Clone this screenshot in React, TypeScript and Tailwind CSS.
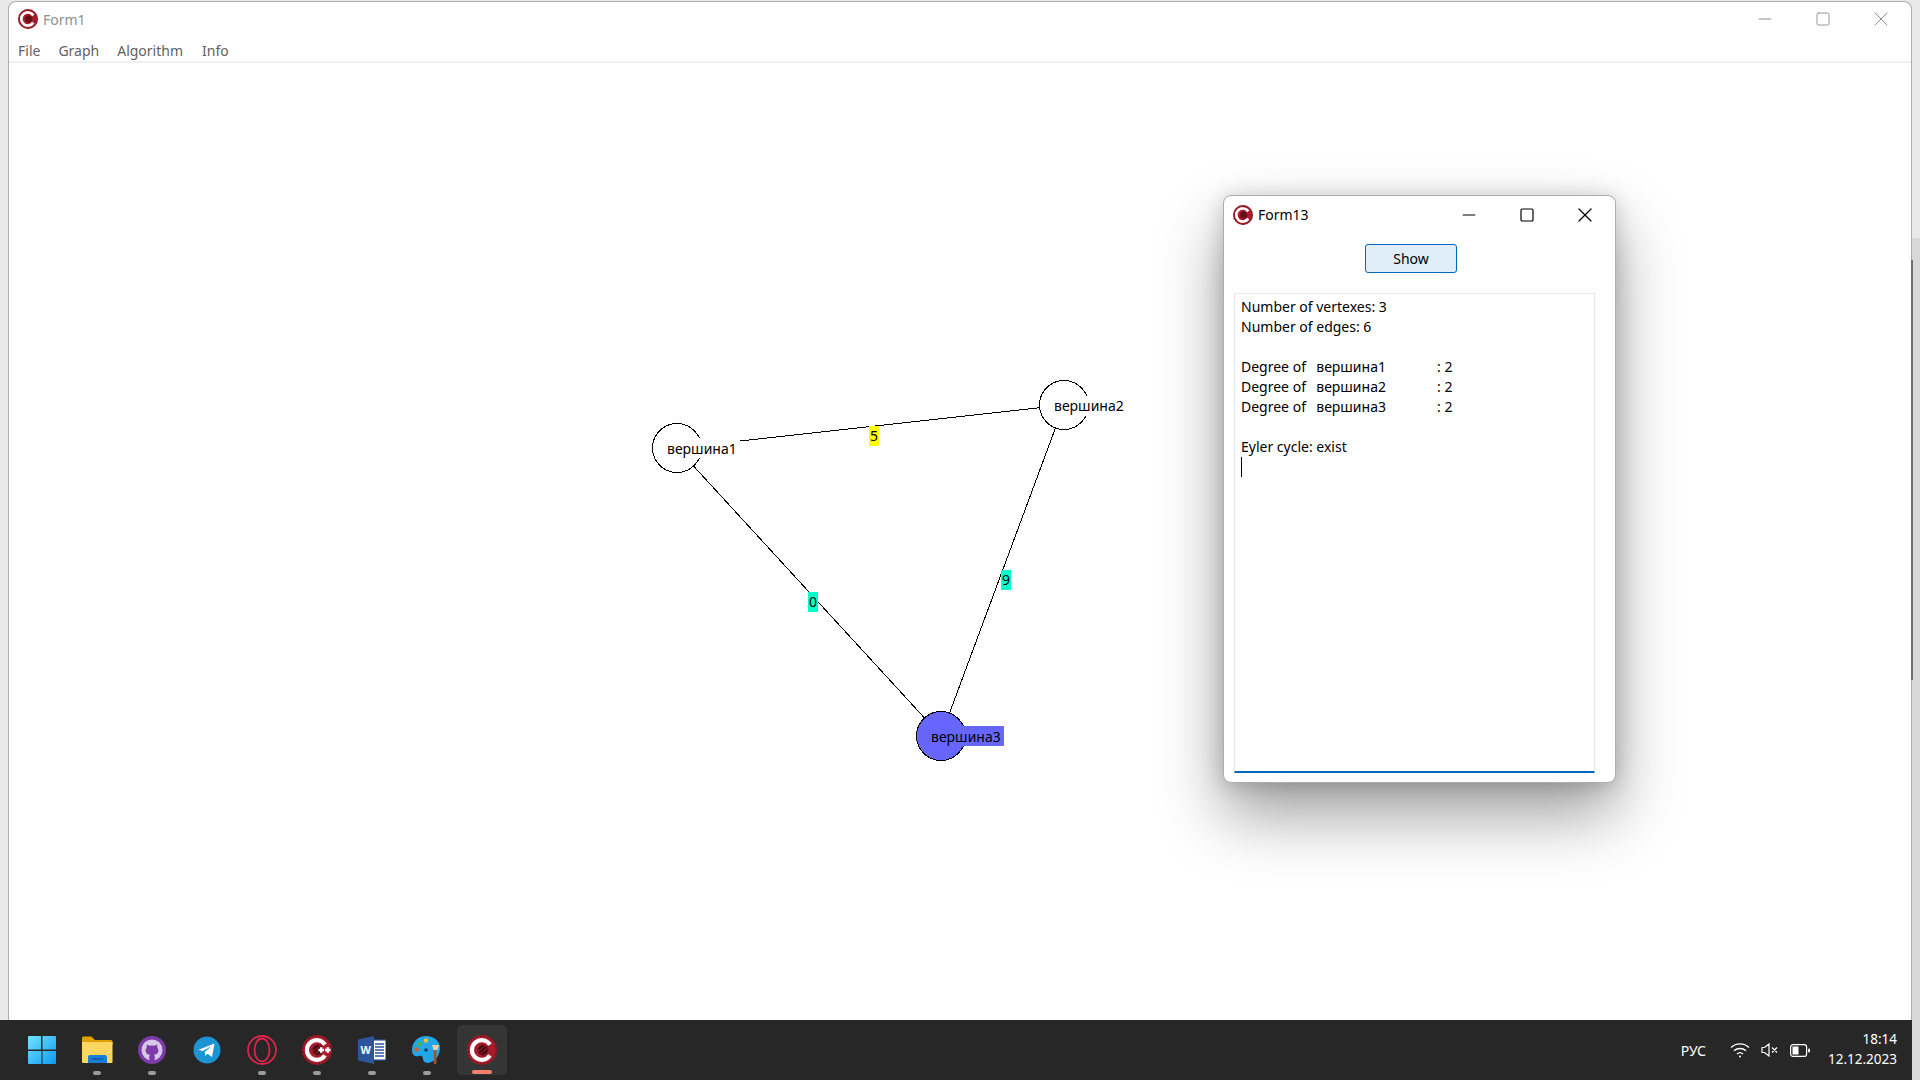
import React from 'react';
import { Minus, Square, X } from 'lucide-react';

const font = "font-['Noto_Sans','Open_Sans',sans-serif]";

// the red C++ Builder style logo, used for the title bars and the taskbar
const AppLogo = ({ size, plus = false }: { size: number; plus?: boolean }) => (
  <svg width={size} height={size} viewBox="0 0 32 32">
    <circle cx="16" cy="16" r="16" fill="#a81c2c" />
    <circle cx="16" cy="16" r="15" fill="none" stroke="#5c0f18" strokeWidth="1" strokeDasharray="2 2" />
    <path d="M24.5 10.2A10.5 10.5 0 1 0 24.5 21.8" fill="none" stroke="#fff" strokeWidth="4.4" />
    <circle cx="17" cy="16" r="6" fill="#7a1420" />
    <path d="M12.5 15l5-4M13 19l7-6M16 21l6-5" stroke="#2d0a0e" strokeWidth="1.4" />
    {plus && (
      <path d="M17.500 16h6M20.500 13v6M24.500 16h6M27.500 13v6" stroke="#fff" strokeWidth="2.600" />
    )}
  </svg>
);

const WindowsIcon = () => (
  <svg width="30" height="30" viewBox="0 0 30 30">
    <defs>
      <linearGradient id="win" x1="0" y1="0" x2="1" y2="1">
        <stop offset="0" stopColor="#6fe4fb" />
        <stop offset="1" stopColor="#0f9bf5" />
      </linearGradient>
    </defs>
    <path d="M1 2a1 1 0 0 1 1-1h12v13.5H1zM15.500 1H28a1 1 0 0 1 1 1v12.500H15.500zM1 16h13.500v13H2a1 1 0 0 1-1-1zM15.500 16H29v12a1 1 0 0 1-1 1H15.500z" fill="url(#win)" />
  </svg>
);

const FolderIcon = () => (
  <svg width="32" height="28" viewBox="0 0 32 28">
    <path d="M1 2a1.500 1.500 0 0 1 1.500-1.500h8L14 4h16a1.500 1.500 0 0 1 1.500 1.500V9H1z" fill="#e0a100" />
    <path d="M1 6h30.500v20a1 1 0 0 1-1 1H2a1 1 0 0 1-1-1z" fill="#fcd661" />
    <path d="M7 21a2 2 0 0 1 2-2h15a2 2 0 0 1 2 2v6H7z" fill="#1a7fd4" />
    <path d="M11 23h11" stroke="#0b4f94" strokeWidth="1.200" />
  </svg>
);

const GithubIcon = () => (
  <svg width="28" height="28" viewBox="0 0 28 28">
    <circle cx="14" cy="14" r="14" fill="#7d3aa8" />
    <circle cx="14" cy="14" r="10.500" fill="#d8c6e6" />
    <path d="M9 8.500l2.500 1.300a9 9 0 0 1 5 0L19 8.500l.5 3.500c.8 1 1 2 .8 3.200-.4 2.300-2 3.300-4.300 3.600.6.500.8 1.200.8 2V25h-5.600v-4.200c0-.800.2-1.500.8-2-2.300-.3-3.900-1.300-4.300-3.600-.2-1.200 0-2.200.8-3.200z" fill="#7d3aa8" />
  </svg>
);

const TelegramIcon = () => (
  <svg width="28" height="28" viewBox="0 0 28 28">
    <circle cx="14" cy="14" r="13.500" fill="#1c93d2" />
    <path d="M5.500 13.800L21.500 7.500 19 21l-4.500-3.200-2.300 2.200-.5-4 7-6-9 5z" fill="#fff" />
  </svg>
);

const OperaIcon = () => (
  <svg width="30" height="30" viewBox="0 0 30 30" fill="none" stroke="#e0234a">
    <circle cx="15" cy="15" r="14" strokeWidth="1.800" />
    <ellipse cx="15" cy="15" rx="7.500" ry="11.500" strokeWidth="1.800" />
  </svg>
);

const WordIcon = () => (
  <svg width="28" height="28" viewBox="0 0 28 28">
    <rect x="12" y="4" width="16" height="20" fill="#fff" stroke="#2b579a" strokeWidth="1.200" />
    <path d="M17 8h9M17 11h9M17 14h9M17 17h9M17 20h9" stroke="#2b579a" strokeWidth="1.400" />
    <path d="M0 3.500L16 0v28L0 24.500z" fill="#2b579a" />
    <text x="2.500" y="18" fill="#fff" fontSize="11" fontWeight="700" fontFamily="Liberation Sans">W</text>
  </svg>
);

const PaletteIcon = () => (
  <svg width="30" height="30" viewBox="0 0 30 30">
    <path d="M14 1C6 1 0 7 0 15c0 6 4 7 7 6 3-1 4 1 4 3s2 4 5 4c8-1 12-9 12-15C28 6 22 1 14 1z" fill="#22a7e8" />
    <circle cx="8" cy="9" r="2.300" fill="#4caf50" />
    <circle cx="14" cy="5.500" r="2.200" fill="#f6c52b" />
    <circle cx="4.500" cy="14.500" r="2.200" fill="#e2592c" />
    <circle cx="14" cy="15" r="1.800" fill="#123b5c" />
    <path d="M20 10h7l-1.500 5h-4z" fill="#e8cda4" />
    <rect x="21.800" y="15" width="2.600" height="14" fill="#a0522d" />
  </svg>
);

const Pill = ({ on }: { on: boolean }) => (
  <div className={on ? 'mt-[5px] h-[4px] w-[8px] rounded-full bg-[#9b9b9b]' : 'mt-[5px] h-[4px] w-[8px]'} />
);

const apps = [
  { icon: <FolderIcon />, on: true },
  { icon: <GithubIcon />, on: true },
  { icon: <TelegramIcon />, on: false },
  { icon: <OperaIcon />, on: true },
  { icon: <AppLogo size={30} plus />, on: true },
  { icon: <WordIcon />, on: true },
  { icon: <PaletteIcon />, on: true },
];

const Taskbar = () => (
  <div className={`${font} flex h-[60px] shrink-0 items-center bg-[#272727] pl-[17px] pr-[23px] text-white`}>
    <div className="flex h-[50px] w-[50px] items-center justify-center">
      <WindowsIcon />
    </div>
    <div className="ml-[5px] flex gap-[5px]">
      {apps.map((app, i) => (
        <div key={i} className="flex h-[50px] w-[50px] flex-col items-center justify-end">
          <div className="flex h-[32px] items-center justify-center">{app.icon}</div>
          <Pill on={app.on} />
        </div>
      ))}
      <div className="flex h-[50px] w-[50px] flex-col items-center justify-end rounded-[5px] bg-[#353535]">
        <div className="flex h-[32px] items-center justify-center">
          <AppLogo size={30} />
        </div>
        <div className="mt-[4px] mb-[1px] h-[4px] w-[20px] rounded-full bg-[#f4806b]" />
      </div>
    </div>
    <div className="ml-auto flex items-center">
      <span className="text-[14px]">РУС</span>
      <svg className="ml-[24px]" width="20" height="16" viewBox="0 0 20 16" fill="none" stroke="#fff" strokeWidth="1.300">
        <path d="M1 5.500a13 13 0 0 1 18 0M4 8.800a9 9 0 0 1 12 0M7 12a4.500 4.500 0 0 1 6 0" />
        <circle cx="10" cy="14.500" r="1" fill="#fff" stroke="none" />
      </svg>
      <svg className="ml-[11px]" width="18" height="14" viewBox="0 0 18 14" fill="none" stroke="#fff" strokeWidth="1.200">
        <path d="M1 4.500h2.500L8 1v12L3.500 9.500H1zM11 4.500l5 5M16 4.500l-5 5" />
      </svg>
      <svg className="ml-[11px]" width="20" height="13" viewBox="0 0 20 13" fill="none">
        <rect x="0.600" y="0.600" width="16" height="11.800" rx="2.500" stroke="#fff" strokeWidth="1.200" />
        <rect x="2.500" y="2.500" width="6" height="8" fill="#fff" />
        <rect x="18" y="4.500" width="2" height="4" rx="1" fill="#fff" />
      </svg>
      <div className="mb-[2px] ml-[18px] flex flex-col items-end text-[13.5px] leading-[20px]">
        <span>18:14</span>
        <span>12.12.2023</span>
      </div>
    </div>
  </div>
);

const GraphCanvas = () => (
  <div className="relative flex-1">
    <svg className="absolute left-0 top-0" width="1903" height="957" viewBox="9 63 1903 957" fill="none" stroke="#000" shapeRendering="crispEdges">
      <path d="M677 448L1064 405M677 448L941 736M1064 405L941 736" />
      <circle cx="677" cy="448" r="24.500" fill="#fff" />
      <circle cx="1064" cy="405" r="24.500" fill="#fff" />
      <circle cx="941" cy="736" r="24.500" fill="#6666ff" />
    </svg>
    <div className="absolute left-[658px] top-[375px] h-[20px] bg-white pr-[3px] pt-px text-[14px] leading-[20px] text-black">вершина1</div>
    <div className="absolute left-[1045px] top-[333px] h-[20px] bg-white pr-[3px] text-[14px] leading-[20px] text-black">вершина2</div>
    <div className="absolute left-[922px] top-[663px] h-[20px] bg-[#6666ff] pr-[3px] pt-px text-[14px] leading-[20px] text-black">вершина3</div>
    <div className="absolute left-[860px] top-[363px] flex h-[20px] w-[10px] justify-center bg-[#ffff00] text-[14px] leading-[20px] text-black">5</div>
    <div className="absolute left-[799px] top-[529px] flex h-[20px] w-[10px] justify-center bg-[#00ffcc] text-[14px] leading-[20px] text-black">0</div>
    <div className="absolute left-[992px] top-[507px] flex h-[20px] w-[10px] justify-center bg-[#00ffcc] text-[14px] leading-[20px] text-black">9</div>
  </div>
);

const DialogWindow = () => (
  <div className="absolute left-[1223px] top-[195px] flex h-[588px] w-[393px] flex-col rounded-[8px] border border-[#adadad] bg-white shadow-[0_32px_64px_rgba(0,0,0,0.38),0_2px_21px_rgba(0,0,0,0.18)]">
    <div className="flex h-[37px] shrink-0 items-center pl-[9px] text-black">
      <AppLogo size={20} />
      <span className="ml-[5px] text-[14px]">Form13</span>
      <div className="ml-auto flex items-center pr-px">
        <div className="flex w-[58px] justify-center"><Minus size={20} strokeWidth={1.400} /></div>
        <div className="flex w-[58px] justify-center"><Square size={16} strokeWidth={1.800} /></div>
        <div className="flex w-[58px] justify-center"><X size={24} strokeWidth={1.200} /></div>
      </div>
    </div>
    <div className="mt-[11px] flex justify-center pr-[17px]">
      <button className="h-[29px] w-[92px] rounded-[3px] border border-[#0067c0] bg-[#e0eef9] text-[14px] text-black">Show</button>
    </div>
    <div className="ml-[10px] mt-[20px] h-[480px] w-[361px] border border-b-2 border-[#e4e8ee] border-b-[#0067c0] px-[6px] pt-[3px] text-[14px] leading-[20px] text-black">
      <div>Number of vertexes: 3</div>
      <div>Number of edges: 6</div>
      <div className="h-[20px]" />
      {['вершина1', 'вершина2', 'вершина3'].map((name) => (
        <div key={name} className="flex whitespace-pre">
          <span className="w-[196px]">Degree of  <span className="ml-[3px]">{name}</span></span>
          <span>: 2</span>
        </div>
      ))}
      <div className="h-[20px]" />
      <div>Eyler cycle: exist</div>
      <div className="h-[20px] w-[1px] bg-black" />
    </div>
  </div>
);

export default function App() {
  return (
    <div className={`${font} relative flex h-[1080px] w-[1920px] flex-col overflow-hidden bg-[#e9e9e9]`}>
      <div className="absolute bottom-0 right-0 top-[238px] w-[8px] bg-[#d8d8d8]" />
      <div className="relative flex min-h-0 flex-1 px-[8px] pt-px">
        <div className="flex flex-1 flex-col rounded-t-[8px] border-x border-t border-[#adadad] bg-white">
          <div className="flex h-[34px] shrink-0 items-center pl-[9px]">
            <AppLogo size={20} />
            <span className="ml-[5px] text-[14px] text-[#8f8f8f]">Form1</span>
            <div className="ml-auto flex items-center pr-px text-[#8f8f8f]">
              <div className="flex w-[58px] justify-center"><Minus size={20} strokeWidth={1.200} /></div>
              <div className="flex w-[58px] justify-center"><Square size={16} strokeWidth={1.400} /></div>
              <div className="flex w-[58px] justify-center"><X size={24} strokeWidth={1} /></div>
            </div>
          </div>
          <div className="flex h-[27px] shrink-0 items-center gap-[18px] border-b-2 border-[#f0f0f0] pl-[9px] pt-[3px] text-[14px] text-[#5f5f5f]">
            <span>File</span>
            <span>Graph</span>
            <span>Algorithm</span>
            <span className="ml-px">Info</span>
          </div>
          <GraphCanvas />
        </div>
      </div>
      <div className="absolute left-[1911px] top-[260px] h-[420px] w-[2px] bg-[#707070]" />
      <DialogWindow />
      <Taskbar />
    </div>
  );
}
